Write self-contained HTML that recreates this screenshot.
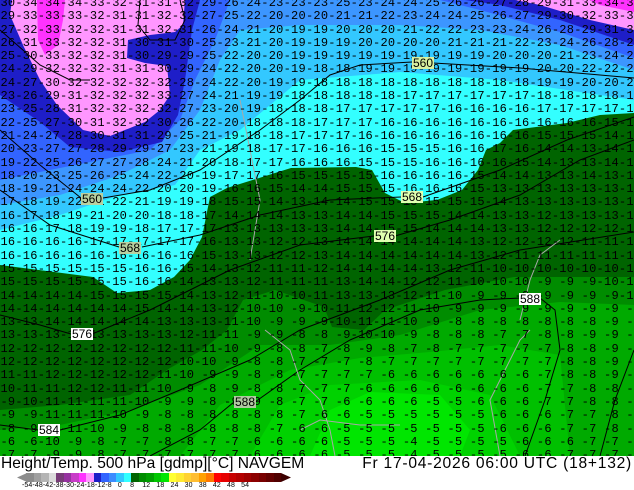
<!DOCTYPE html>
<html><head><meta charset="utf-8"><style>
body{margin:0;width:634px;height:490px;overflow:hidden;background:#fff;position:relative;font-family:"Liberation Sans",sans-serif}
#map{position:absolute;left:0;top:0;width:634px;height:456px;overflow:hidden}
pre{position:absolute;left:-7px;top:-3px;margin:0;font:12px/13.3px "Liberation Mono",monospace;letter-spacing:0.25px;color:#000;white-space:pre}
.lb{position:absolute;font:12px/12px "Liberation Sans",sans-serif;color:#000;padding:0 1px;height:12px;text-align:center}
#t1{position:absolute;left:1px;top:455px;font-size:15.6px;color:#000;white-space:nowrap}
#t2{position:absolute;right:2px;top:455px;font-size:15.6px;letter-spacing:0.75px;color:#000;white-space:nowrap}
#bar{position:absolute;left:26px;top:473px;height:9px;display:flex}
#bar i{display:block;width:7.5px;height:9px}
#bl{position:absolute;top:482px;left:22px;font-size:7px;color:#000;white-space:pre;letter-spacing:0.1px}
</style></head><body>
<div id="map">
<svg width="634" height="456" style="position:absolute;left:0;top:0">
<rect width="634" height="456" fill="#33ffff"/>
<polygon fill="#33c8ff" points="0,0 634,0 634,100 500,80 400,72 300,80 240,130 200,150 175,185 120,195 60,215 0,230"/>
<polygon fill="#3c96ff" points="0,0 634,0 634,70 560,45 480,30 400,25 300,25 240,30 220,60 200,110 170,150 120,175 60,195 0,205"/>
<polygon fill="#3264ff" points="0,0 230,0 215,40 195,80 180,120 150,150 100,160 50,170 0,180"/>
<polygon fill="#3264ff" points="440,0 634,0 634,58 560,32 480,10"/>
<polygon fill="#1e1ec8" points="0,0 200,0 192,30 185,80 178,115 162,142 120,152 70,147 40,122 0,95"/>
<polygon fill="#1e1ec8" points="465,0 634,0 634,45 560,20 500,5"/>
<polygon fill="#ff96ff" points="12,0 185,0 183,25 175,32 150,35 128,40 127,58 145,63 167,66 170,95 160,110 145,122 110,136 83,130 57,105 40,80 23,45 10,15"/>
<polygon fill="#ff96ff" points="515,0 634,0 634,30 590,20 540,5"/>
<polygon fill="#ff32ff" points="37,0 65,0 63,20 58,45 45,55 38,40"/>
<polygon fill="#ff32ff" points="590,0 634,0 634,12 600,5"/>
<polygon fill="#006400" points="0,265 93,277 117,293 150,290 174,277 190,260 202,237 210,197 227,188 275,173 291,168 356,167 372,170 385,193 405,203 437,200 462,190 478,170 486,150 500,143 513,130 567,123 600,115 634,113 634,456 0,456"/>
<polygon fill="#008c00" points="0,410 60,405 130,395 170,368 202,350 227,330 243,300 275,290 324,307 332,327 364,330 385,310 445,290 514,277 634,277 634,456 0,456"/>
<polygon fill="#00aa00" points="0,430 60,425 130,410 200,385 260,345 330,345 400,335 480,310 560,302 634,305 634,456 0,456"/>
<polygon fill="#00c000" points="180,456 220,405 290,370 360,358 430,352 500,345 560,355 570,456"/>
<polygon fill="#00d200" points="250,456 280,405 330,385 420,380 490,395 520,456"/>
<polygon fill="#00e600" points="310,456 330,410 370,392 440,395 470,430 460,456"/>
<g fill="none" stroke="#000" stroke-width="1">
<polyline points="0,130 40,165 81,198"/><polyline points="103,198 150,190 200,170 260,130 300,100 330,75 360,65 412,62"/><polyline points="433,63 520,68 600,75 634,78"/>
<polyline points="0,190 50,225 119,247"/><polyline points="142,247 200,235 260,215 330,200 401,197"/><polyline points="423,197 500,170 567,140 634,117"/>
<polyline points="0,315 40,325 71,334"/><polyline points="92,334 150,310 230,270 300,245 374,236"/><polyline points="395,236 450,220 520,195 580,160 634,140"/>
<polyline points="0,425 38,430"/><polyline points="60,430 120,415 180,390 250,360 300,330 380,300 450,270 520,250 634,232"/>
<polyline points="150,456 200,430 234,402"/><polyline points="255,402 300,370 350,340 420,310 480,300 520,298"/><polyline points="540,298 555,310 560,350 545,400 525,456"/>
<polyline points="634,350 615,400 600,456"/>
<polyline points="140,0 138,25 150,40 175,40 185,20 180,0"/>
<polyline points="0,30 40,65 70,80 90,80"/>
</g>
<g fill="none" stroke="#a8a8a8" stroke-width="1">
<polyline points="265,330 290,350 300,380 320,400 330,430 335,456"/>
<polyline points="300,430 320,420 360,425 400,425"/>
<polyline points="530,330 520,340 490,400 500,456"/>
<polyline points="560,240 540,255 530,280 520,320"/>
<polyline points="240,100 260,200 250,260"/>
</g>
</svg>
<pre>-30-34-34-34-33-32-31-31-32-29-26-24-23-23-23-25-23-24-24-25-26-26-27-28-29-31-33-34-34-34
-29-33-33-33-32-31-31-32-32-27-25-22-20-20-20-21-21-22-23-24-24-25-26-27-29-30-32-33-33-33
-27-32-33-32-32-31-31-32-31-26-24-21-20-19-19-20-20-20-21-22-22-23-23-24-26-28-29-31-32
-26-31-33-32-32-31-30-31-30-25-23-21-20-19-19-19-20-20-20-20-21-21-21-22-23-24-26-28-29
-25-30-33-32-32-31-30-29-29-25-22-20-20-19-19-19-19-19-19-19-19-19-20-20-20-21-23-24-26
-24-29-32-32-32-31-31-30-29-24-22-20-20-19-18-18-19-19-19-19-19-19-19-19-20-20-22-22-22
-24-27-30-32-32-32-32-32-28-24-22-20-19-19-18-18-18-18-18-18-18-18-18-18-19-19-20-20-20
-23-26-29-31-32-32-32-33-27-24-21-19-19-18-18-18-18-18-17-17-17-17-17-17-18-18-18-18-18
-23-25-28-31-32-32-32-32-27-23-20-19-18-18-18-17-17-17-17-17-16-16-16-16-17-17-17-17-17
-22-25-27-30-31-32-32-30-26-22-20-18-18-18-17-17-17-16-16-16-16-16-16-16-16-16-16-15-15
-21-24-27-28-30-31-31-29-25-21-19-18-18-17-17-17-16-16-16-16-16-16-16-16-15-15-15-14-13
-20-23-27-27-28-29-29-27-23-21-19-18-17-17-16-16-16-15-15-15-16-16-17-16-14-14-13-14-13
-19-22-25-26-27-27-28-24-21-20-18-17-17-16-16-16-15-15-15-16-16-16-16-15-14-13-13-14-13
-18-20-23-25-26-25-24-22-20-19-17-17-16-15-15-15-15-16-16-16-16-15-14-14-13-13-14-13-13
-18-19-21-24-24-24-22-20-20-19-16-16-15-14-14-15-15-15-16-16-16-15-13-13-13-13-13-13-13
-17-18-19-22-21-22-21-19-19-18-15-15-14-13-14-14-15-15-15-15-15-15-14-13-13-13-13-13-13
-16-17-18-19-21-20-20-18-18-17-14-14-14-13-13-14-14-15-15-15-14-14-13-13-12-13-13-13-13
-16-16-17-18-19-19-18-17-17-17-13-13-13-13-13-14-14-15-15-14-14-14-13-13-12-12-12-12-12
-16-16-16-16-17-17-17-17-17-16-13-13-12-12-13-14-14-14-14-14-14-13-12-12-12-12-11-11-12
-16-16-16-16-16-16-16-16-16-15-13-13-12-12-13-14-14-14-14-14-14-13-12-11-11-11-11-11-11
-15-15-15-15-15-15-16-16-15-14-13-12-11-11-12-14-14-14-14-13-12-11-10-10-10-10-10-10-10
-15-15-15-15-15-15-16-16-14-13-13-12-11-11-11-13-14-14-12-12-11-10-10-10 -9 -9 -9-10-10
-14-14-14-14-15-15-15-15-14-13-12-11-10-10-11-13-13-13-12-11-10 -9 -9 -9 -9 -9 -9 -9-10
-14-14-14-14-14-14-15-14-14-13-12-10-10 -9-10-11-12-12-11-10 -9 -9 -9 -9 -9 -9 -9 -9 -9
-13-13-14-14-14-14-14-13-13-13-11-10 -9 -9 -9-10-11-11-10 -9 -8 -8 -8 -8 -8 -8 -8 -9 -9
-13-13-13-13-13-13-13-13-12-11-11 -9 -9 -8 -8 -9-10-10 -9 -8 -8 -8 -7 -7 -8 -8 -9 -9 -9
-12-12-12-12-12-12-12-12-11-11-10 -9 -8 -8 -7 -8 -9 -8 -7 -8 -7 -7 -7 -7 -7 -8 -8 -9 -9
-12-12-12-12-12-12-12-12-10-10 -9 -8 -8 -7 -7 -7 -8 -7 -7 -7 -7 -7 -7 -7 -7 -8 -8 -9 -9
-11-11-12-12-12-12-12-11-10 -9 -9 -8 -8 -7 -7 -7 -7 -6 -6 -6 -6 -6 -6 -6 -7 -8 -8 -9 -9
-10-11-11-12-12-11-11-10 -9 -8 -9 -8 -8 -7 -7 -7 -6 -6 -6 -6 -6 -6 -6 -6 -7 -7 -8 -8 -9
 -9-10-11-11-11-11-10 -9 -9 -8 -9 -9 -8 -7 -7 -6 -6 -6 -6 -5 -5 -6 -6 -6 -7 -7 -8 -8 -9
 -9 -9-11-11-11-10 -9 -8 -8 -8 -8 -8 -8 -7 -6 -6 -5 -5 -5 -5 -5 -5 -6 -6 -6 -7 -7 -8 -9
 -8 -9-10-11-10 -9 -8 -8 -8 -8 -8 -8 -7 -6 -6 -5 -5 -5 -5 -5 -5 -5 -6 -6 -6 -7 -7 -8 -8
 -6 -6-10 -9 -8 -7 -7 -8 -8 -7 -7 -6 -6 -6 -6 -5 -5 -5 -4 -5 -5 -5 -5 -6 -6 -6 -7 -7 -8
 -7 -7 -9 -9 -8 -7 -7 -7 -7 -7 -7 -6 -6 -6 -6 -5 -5 -5 -4 -5 -5 -5 -5 -6 -6 -7 -7 -7 -8</pre>
<div class="lb" style="left:412px;top:57px;background:#d8f0a0">560</div>
<div class="lb" style="left:81px;top:193px;background:#b8d0a0">560</div>
<div class="lb" style="left:119px;top:242px;background:#b8d0a0">568</div>
<div class="lb" style="left:401px;top:191px;background:#e0ffb0">568</div>
<div class="lb" style="left:374px;top:230px;background:#e0ffb0">576</div>
<div class="lb" style="left:71px;top:328px;background:#fff">576</div>
<div class="lb" style="left:519px;top:293px;background:#fff">588</div>
<div class="lb" style="left:234px;top:396px;background:#b0c8a0">588</div>
<div class="lb" style="left:38px;top:424px;background:#fff">584</div>
</div>
<div id="t1">Height/Temp. 500 hPa [gdmp][°C] NAVGEM</div>
<div id="t2">Fr 17-04-2026 06:00 UTC (18+132)</div>
<svg style="position:absolute;left:17px;top:473px" width="10" height="9"><polygon points="0,4.5 10,0 10,9" fill="#8c8c8c"/></svg>
<div id="bar"><i style="background:#8c8c8c"></i><i style="background:#a0a0a0"></i><i style="background:#b4b4b4"></i><i style="background:#dcdcdc"></i><i style="background:#783c78"></i><i style="background:#9632a0"></i><i style="background:#c83cc8"></i><i style="background:#ff32ff"></i><i style="background:#ff96ff"></i><i style="background:#1e1ec8"></i><i style="background:#3264ff"></i><i style="background:#3c8cff"></i><i style="background:#32c8ff"></i><i style="background:#32ffff"></i><i style="background:#006400"></i><i style="background:#008c00"></i><i style="background:#00a000"></i><i style="background:#00c800"></i><i style="background:#00e600"></i><i style="background:#ffff32"></i><i style="background:#ffeb32"></i><i style="background:#ffd232"></i><i style="background:#ffbe32"></i><i style="background:#ffa000"></i><i style="background:#ff7800"></i><i style="background:#ff0000"></i><i style="background:#e60000"></i><i style="background:#c80000"></i><i style="background:#b40000"></i><i style="background:#a00000"></i><i style="background:#8c0000"></i><i style="background:#780000"></i><i style="background:#640000"></i><i style="background:#500000"></i></div>
<svg style="position:absolute;left:281px;top:473px" width="10" height="9"><polygon points="0,0 10,4.5 0,9" fill="#3c0000"/></svg>
<div id="bl">-54-48-42-38-30-24-18-12-8   0    8    12   18   24   30   38   42   48   54</div>
</body></html>
